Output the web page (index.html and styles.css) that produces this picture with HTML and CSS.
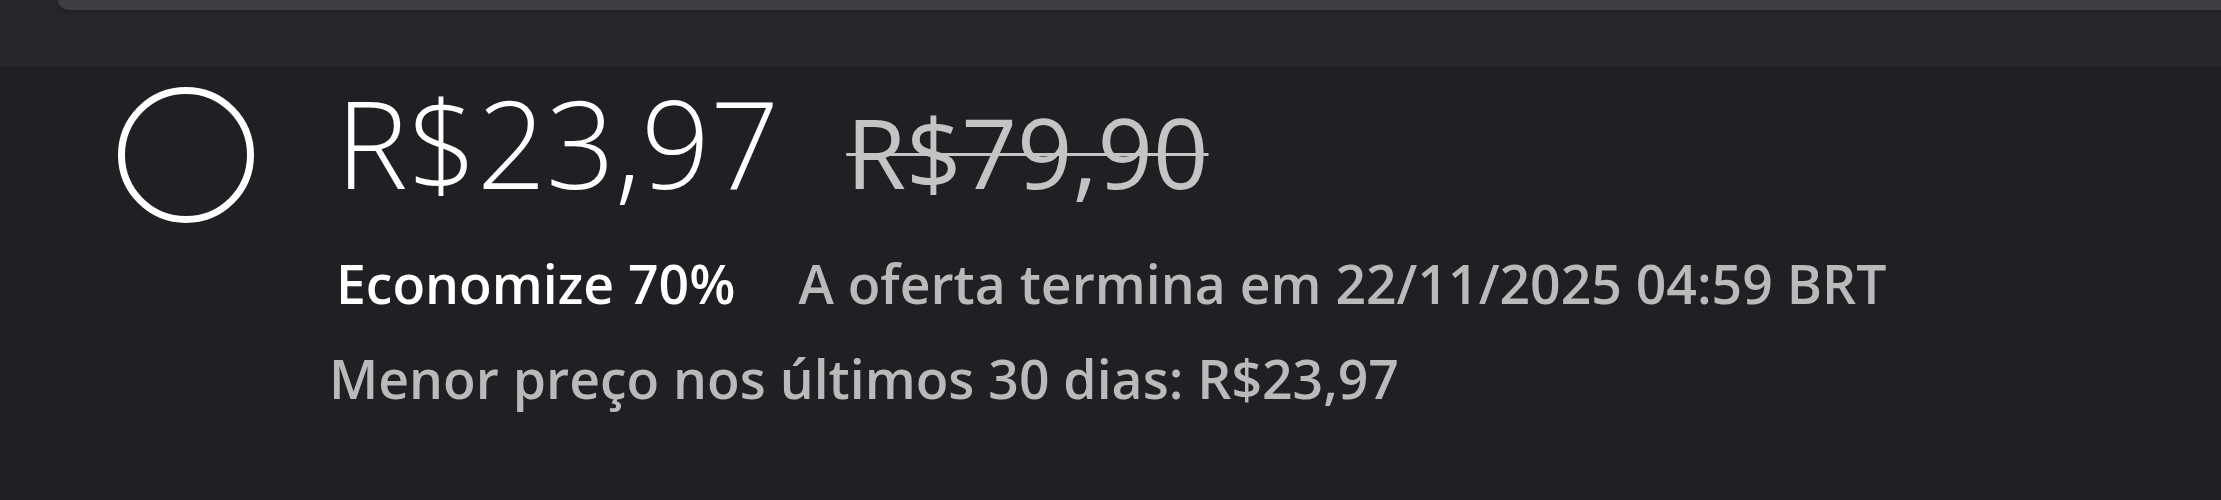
FILE: index.html
```html
<!DOCTYPE html>
<html lang="pt-BR">
<head>
    <meta charset="UTF-8">
    <meta name="viewport" content="width=device-width, initial-scale=1.0">
    <title>Oferta</title>
    <link rel="stylesheet" href="styles.css">
</head>
<body>
    <div class="top-band">
        <div class="top-bar"></div>
    </div>
    <div class="offer">
        <div class="radio"></div>
        <div class="offer-info">
            <div class="prices">
                <span class="price">R$23,97</span>
                <span class="old-price">R$79,90</span>
            </div>
            <div class="details">
                <span class="discount">Economize 70%</span>
                <span class="ends">A oferta termina em 22/11/2025 04:59 BRT</span>
            </div>
            <div class="lowest">Menor preço nos últimos 30 dias: R$23,97</div>
        </div>
    </div>
</body>
</html>
```

FILE: styles.css
```css
body {
    margin: 0;
    padding: 0;
    background-color: #1f2024;
    font-family: "Open Sans", "Noto Sans", sans-serif;
    color: #ffffff;
    height: 500px;
    overflow: hidden;
}
.top-band {
    height: 66px;
    background-color: #27272b; /* slightly lighter strip */
}
.top-bar {
    height: 10px;
    margin-left: 58px;
    background-color: #3e3f42;
    border-bottom-left-radius: 12px;
    box-shadow: 0 2px 4px rgba(0, 0, 0, 0.25);
}
.offer {
    display: flex;
    align-items: flex-start;
    padding-left: 118px;
    padding-top: 16px;
}
.radio {
    width: 136px;
    height: 136px;
    box-sizing: border-box;
    border: 7px solid #ffffff;
    border-radius: 50%;
    margin-top: 5px;
    margin-right: 82px;
    flex-shrink: 0;
}
.prices {
    display: flex;
    align-items: baseline;
    gap: 67px;
}
.price {
    font-size: 121px;
    line-height: 121px;
    font-weight: 300;
}
.old-price {
    font-size: 97px;
    line-height: 97px;
    font-weight: 400;
    color: #c4c4c4;
    text-decoration: line-through;
    text-decoration-thickness: 3px;
}
.details {
    display: flex;
    align-items: baseline;
    gap: 63px;
    margin-top: 54px;
    font-size: 53.5px;
    line-height: 54px;
    font-weight: 600;
}
.discount {
    color: #ffffff;
}
.ends {
    color: #bababa;
}
.lowest {
    margin-top: 41px;
    margin-left: -7px;
    font-size: 53.5px;
    line-height: 54px;
    font-weight: 600;
    color: #bababa;
}
```
